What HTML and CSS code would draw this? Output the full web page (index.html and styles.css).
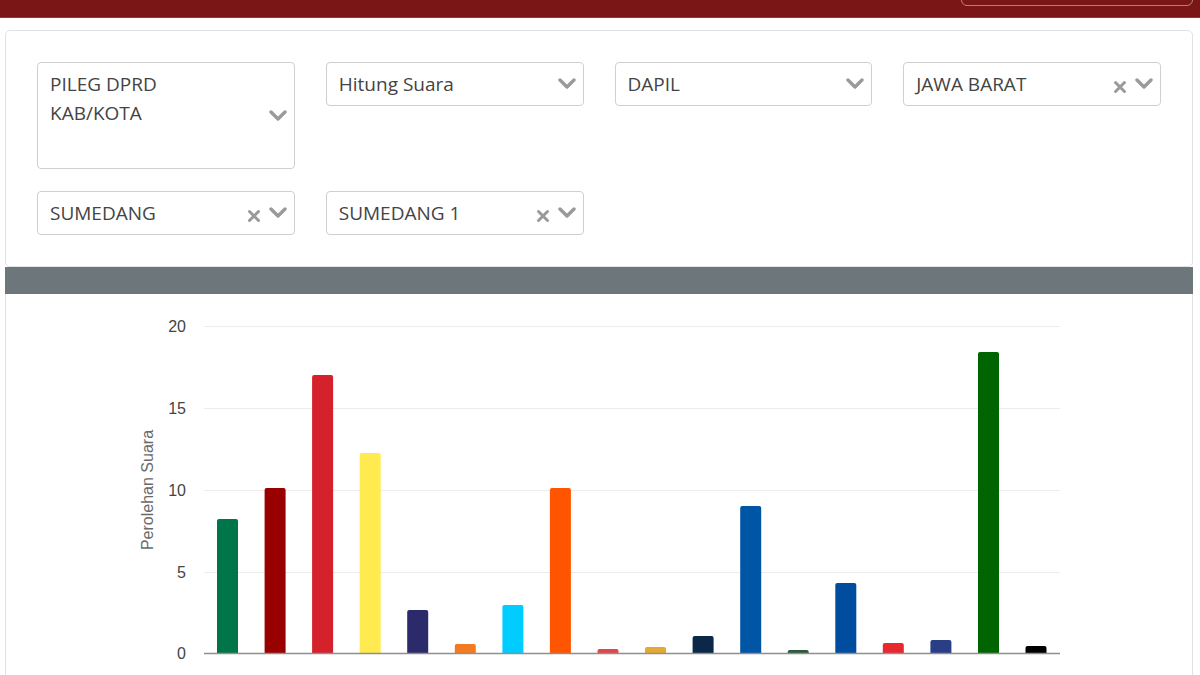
FILE: index.html
```html
<!DOCTYPE html>
<html lang="id">
<head>
<meta charset="utf-8">
<title>Hitung Suara</title>
<link rel="stylesheet" href="styles.css">
</head>
<body>
<header class="topbar">
  <div class="logo">
    <svg width="26" height="24" viewBox="0 0 26 24"><circle cx="13" cy="10" r="11" fill="#8d7f7a"/><circle cx="13" cy="10" r="7" fill="#cfc7c0"/><rect x="10" y="14" width="6" height="6" fill="#5a4a48"/></svg>
  </div>
  <div class="top-btn"></div>
</header>

<main class="page">
  <section class="filter-card">
    <div class="select select-tall">
      <span class="select-text">PILEG DPRD<br>KAB/KOTA</span>
      <span class="icons"><svg class="chev" width="18" height="12" viewBox="0 0 18 12"><polyline points="2,2 9,9 16,2"/></svg></span>
    </div>
    <div class="select">
      <span class="select-text">Hitung Suara</span>
      <span class="icons"><svg class="chev" width="18" height="12" viewBox="0 0 18 12"><polyline points="2,2 9,9 16,2"/></svg></span>
    </div>
    <div class="select">
      <span class="select-text">DAPIL</span>
      <span class="icons"><svg class="chev" width="18" height="12" viewBox="0 0 18 12"><polyline points="2,2 9,9 16,2"/></svg></span>
    </div>
    <div class="select">
      <span class="select-text">JAWA BARAT</span>
      <span class="icons"><svg class="clear" width="14" height="14" viewBox="0 0 14 14"><path d="M2.5 2.5L11.5 11.5M11.5 2.5L2.5 11.5"/></svg><svg class="chev" width="18" height="12" viewBox="0 0 18 12"><polyline points="2,2 9,9 16,2"/></svg></span>
    </div>
    <div class="select">
      <span class="select-text">SUMEDANG</span>
      <span class="icons"><svg class="clear" width="14" height="14" viewBox="0 0 14 14"><path d="M2.5 2.5L11.5 11.5M11.5 2.5L2.5 11.5"/></svg><svg class="chev" width="18" height="12" viewBox="0 0 18 12"><polyline points="2,2 9,9 16,2"/></svg></span>
    </div>
    <div class="select">
      <span class="select-text">SUMEDANG 1</span>
      <span class="icons"><svg class="clear" width="14" height="14" viewBox="0 0 14 14"><path d="M2.5 2.5L11.5 11.5M11.5 2.5L2.5 11.5"/></svg><svg class="chev" width="18" height="12" viewBox="0 0 18 12"><polyline points="2,2 9,9 16,2"/></svg></span>
    </div>
  </section>

  <section class="chart-card">
    <div class="chart-head"></div>
    <div class="chart-body">
      <svg class="chart" width="1186" height="381" viewBox="6 294 1186 381">
        <g class="grid">
          <line x1="204" y1="326.5" x2="1060" y2="326.5"/>
          <line x1="204" y1="408.5" x2="1060" y2="408.5"/>
          <line x1="204" y1="490.5" x2="1060" y2="490.5"/>
          <line x1="204" y1="572.5" x2="1060" y2="572.5"/>
        </g>
        <g class="ylabels">
          <text x="186" y="332">20</text>
          <text x="186" y="414">15</text>
          <text x="186" y="496">10</text>
          <text x="186" y="578">5</text>
          <text x="186" y="659">0</text>
        </g>
        <text class="ytitle" transform="translate(153 490) rotate(-90)">Perolehan Suara</text>
        <g class="bars">
          <rect x="217" y="519" width="21" height="137" rx="2" fill="#00754a"/>
          <rect x="264.6" y="488" width="21" height="168" rx="2" fill="#990000"/>
          <rect x="312.1" y="375" width="21" height="281" rx="2" fill="#d4212b"/>
          <rect x="359.7" y="453" width="21" height="203" rx="2" fill="#ffeb4f"/>
          <rect x="407.2" y="610" width="21" height="46" rx="2" fill="#2b2a6b"/>
          <rect x="454.8" y="644" width="21" height="12" rx="2" fill="#f47a20"/>
          <rect x="502.4" y="605" width="21" height="51" rx="2" fill="#00ccff"/>
          <rect x="549.9" y="488" width="21" height="168" rx="2" fill="#ff5500"/>
          <rect x="597.5" y="649" width="21" height="7" rx="2" fill="#e0474c"/>
          <rect x="645" y="647" width="21" height="9" rx="2" fill="#e8a830"/>
          <rect x="692.6" y="636" width="21" height="20" rx="2" fill="#0b2848"/>
          <rect x="740.2" y="506" width="21" height="150" rx="2" fill="#0055a5"/>
          <rect x="787.7" y="650" width="21" height="6" rx="2" fill="#2d5a3d"/>
          <rect x="835.3" y="583" width="21" height="73" rx="2" fill="#004c9e"/>
          <rect x="882.8" y="643" width="21" height="13" rx="2" fill="#e8272f"/>
          <rect x="930.4" y="640" width="21" height="16" rx="2" fill="#2a3e87"/>
          <rect x="978" y="352" width="21" height="304" rx="2" fill="#006400"/>
          <rect x="1025.5" y="646" width="21" height="10" rx="2" fill="#000000"/>
        </g>
        <rect class="base-mask" x="204" y="654" width="856" height="6"/>
        <line class="baseline" x1="204" y1="653.5" x2="1060" y2="653.5"/>
      </svg>
    </div>
  </section>
</main>
</body>
</html>
```

FILE: styles.css
```css
* {
  box-sizing: border-box;
}

html, body {
  margin: 0;
  padding: 0;
  background: #ffffff;
  font-family: "Open Sans", "Noto Sans", sans-serif;
  color: #444;
  overflow: hidden;
}

.topbar {
  height: 18px;
  background: #7b1616;
  display: flex;
  justify-content: space-between;
  align-items: flex-start;
  padding: 0 7px 0 9px;
  overflow: hidden;
  border-bottom: 1px solid #8a3a3a;
}

.logo {
  margin-top: -21px;
  height: 24px;
}

.top-btn {
  width: 232px;
  height: 30px;
  margin-top: -24px;
  border: 1.5px solid rgba(255, 255, 255, 0.45);
  border-radius: 6px;
}

.page {
  padding: 12px 7px 0 5px;
}

.filter-card {
  height: 237px;
  border: 1px solid #e2e2e2;
  border-radius: 5px;
  padding: 31px 31px 30px 31px;
  display: grid;
  grid-template-columns: repeat(4, 1fr);
  grid-template-rows: 107px 44px;
  column-gap: 31px;
  row-gap: 22px;
  align-items: start;
}

.select {
  height: 44px;
  border: 1px solid #cfcfcf;
  border-radius: 4px;
  display: flex;
  align-items: center;
  padding: 0 7px 0 12px;
  background: #fff;
}

.select-tall {
  height: 107px;
  align-items: flex-start;
}

.select-text {
  flex: 1;
  font-size: 19px;
  line-height: 29px;
  color: #444;
  white-space: nowrap;
}

.select-tall .select-text {
  padding-top: 7px;
}

.select-tall .icons {
  align-self: center;
}

.icons {
  display: flex;
  align-items: center;
  gap: 8px;
}

.chev polyline {
  fill: none;
  stroke: #9a9a9a;
  stroke-width: 3.4;
  stroke-linecap: round;
  stroke-linejoin: round;
}

.clear {
  margin-top: 5px;
}

.clear path {
  stroke: #9a9a9a;
  stroke-width: 3;
  stroke-linecap: round;
}

.chart-card {
  border-left: 1px solid #e2e2e2;
  border-right: 1px solid #e2e2e2;
}

.chart-head {
  height: 27px;
  background: #6c767b;
  margin: 0 -1px;
}

.chart-body {
  height: 381px;
}

.chart {
  display: block;
}

.grid line {
  stroke: #ececec;
  stroke-width: 1;
}

.ylabels text {
  font-family: "Liberation Sans", Arial, sans-serif;
  font-size: 16px;
  fill: #444;
  text-anchor: end;
}

.ytitle {
  font-family: "Liberation Sans", Arial, sans-serif;
  font-size: 16px;
  fill: #6a6a6a;
  text-anchor: middle;
}

.base-mask {
  fill: #ffffff;
}

.baseline {
  stroke: #8f8f8f;
  stroke-width: 1.5;
}
```
